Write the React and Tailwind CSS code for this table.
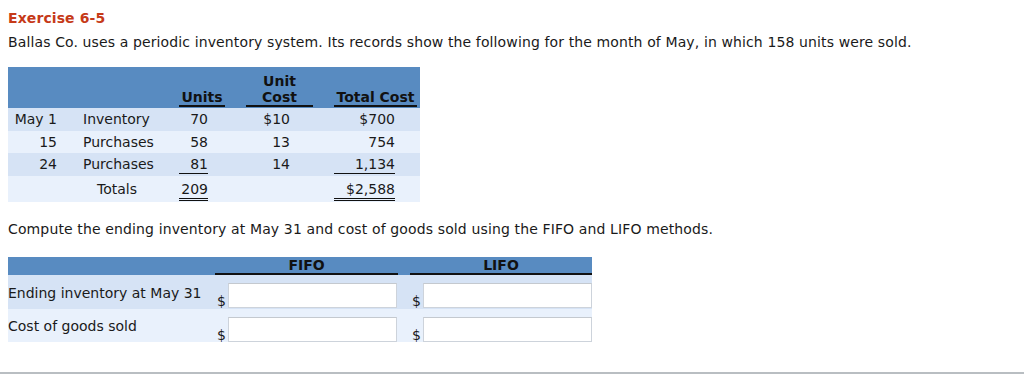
import React from "react";

const rows = [
  { d: "May 1", desc: "Inventory", u: "70", c: "$10", t: "$700", bg: "bg-[#d6e3f5]", h: "h-[23px]" },
  { d: "15", desc: "Purchases", u: "58", c: "13", t: "754", bg: "bg-[#e9f1fc]", h: "h-[22px]" },
  { d: "24", desc: "Purchases", u: "81", c: "14", t: "1,134", bg: "bg-[#d6e3f5]", h: "h-[23px]", line: true },
];

function Money() {
  return (
    <div className="flex items-end">
      <span className="w-[12px] pl-[1px] leading-[16px] mb-[-1px]">$</span>
      <div className="w-[169px] h-[25px] bg-white border border-[#cdd3db] border-t-[#c4c9cf]" />
    </div>
  );
}

export default function App() {
  return (
    <div className="w-[1024px] h-[374px] bg-white font-['DejaVu_Sans',Verdana,sans-serif] text-[14px] text-[#1a1a1a] flex flex-col">
      <div className="px-[8px] pt-[10px]">
        <div className="font-bold text-[#c63a18] leading-[17px] tracking-[0.1px]">Exercise 6-5</div>
        <div className="mt-[7px] leading-[17px] tracking-[0.12px]">
          Ballas Co. uses a periodic inventory system. Its records show the following for the month of May, in which 158 units were sold.
        </div>

        <div className="mt-[16px] w-[412px]">
          <div className="h-[41px] bg-[#588bc1] flex items-end pb-[1px] font-bold leading-[16px] text-[#111]">
            <div className="w-[171px]" />
            <div className="w-[46px] border-b-2 border-[#111] text-center">Units</div>
            <div className="w-[21px]" />
            <div className="w-[67px] border-b-2 border-[#111] text-center">
              <div>Unit</div>
              <div>Cost</div>
            </div>
            <div className="w-[21px]" />
            <div className="w-[83px] border-b-2 border-[#111] text-center">Total Cost</div>
          </div>
          {rows.map((r, i) => (
            <div key={i} className={`${r.bg} ${r.h} flex items-center leading-[17px]`}>
              <div className="w-[49px] text-right">{r.d}</div>
              <div className="w-[26px]" />
              <div className="w-[96px]">{r.desc}</div>
              <div className="w-[46px]">
                <div className={`w-[29px] text-right ${r.line ? "border-b border-[#111]" : ""}`}>{r.u}</div>
              </div>
              <div className="w-[21px]" />
              <div className="w-[44px] text-right">{r.c}</div>
              <div className="w-[23px]" />
              <div className="w-[21px]" />
              <div className="w-[61px]">
                <div className={`text-right ${r.line ? "border-b border-[#111]" : ""}`}>{r.t}</div>
              </div>
            </div>
          ))}
          <div className="h-[26px] bg-[#e9f1fc] flex items-start pt-[5px] leading-[17px]">
            <div className="w-[75px]" />
            <div className="w-[96px] pl-[14px]">Totals</div>
            <div className="w-[46px]">
              <div className="w-[29px] text-right border-b-[3px] border-double border-[#111]">209</div>
            </div>
            <div className="w-[109px]" />
            <div className="w-[61px] text-right border-b-[3px] border-double border-[#111]">$2,588</div>
          </div>
        </div>

        <div className="mt-[19px] leading-[17px] tracking-[0.13px]">
          Compute the ending inventory at May 31 and cost of goods sold using the FIFO and LIFO methods.
        </div>

        <div className="mt-[19px] w-[584px]">
          <div className="h-[18px] bg-[#588bc1] flex items-end font-bold leading-[16px] text-[#111]">
            <div className="w-[207px]" />
            <div className="w-[183px] text-center border-b-2 border-[#111]">FIFO</div>
            <div className="w-[12px]" />
            <div className="w-[182px] text-center border-b-2 border-[#111]">LIFO</div>
          </div>
          <div className="h-[34px] bg-[#d6e3f5] flex items-start">
            <div className="w-[208px] pt-[10px] leading-[17px]">Ending inventory at May 31</div>
            <div className="self-end pb-[1px]"><Money /></div>
            <div className="w-[14px]" />
            <div className="self-end pb-[1px]"><Money /></div>
          </div>
          <div className="h-[33px] bg-[#e9f1fc] flex items-start">
            <div className="w-[208px] pt-[9px] leading-[17px]">Cost of goods sold</div>
            <div className="self-end"><Money /></div>
            <div className="w-[14px]" />
            <div className="self-end"><Money /></div>
          </div>
        </div>
      </div>
      <div className="mt-auto h-[2px] bg-[#b9bec2]" />
    </div>
  );
}
